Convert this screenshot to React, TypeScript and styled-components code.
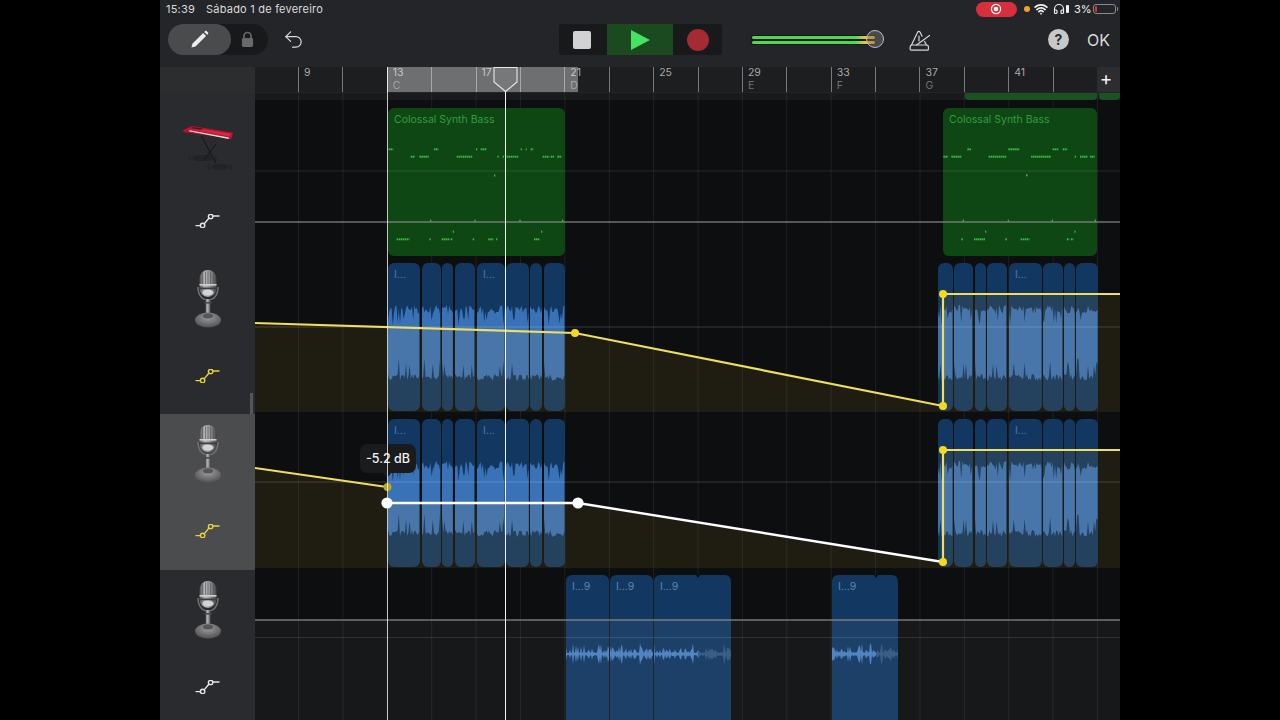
import React from "react";
import styled, { createGlobalStyle } from "styled-components";
import { Undo2, Headphones, Wifi } from "lucide-react";

const Global = createGlobalStyle`
  html, body { margin: 0; padding: 0; background: #000; }
  body { font-family: Inter, "Liberation Sans", sans-serif; }
`;

const Page = styled.div`
  width: 1280px; height: 720px; background: #000; display: flex; justify-content: center; overflow: hidden;
`;
const Frame = styled.div`
  position: relative; width: 960px; height: 720px; background: #232528;
  display: flex; flex-direction: column; overflow: hidden;
`;
const StatusBar = styled.div`
  height: 18px; display: flex; align-items: center; padding: 0 4px 0 6px; color: #dcdcdc; font-size: 11px; flex: none;
`;
const StatusTime = styled.span` width: 40px; letter-spacing: 0.2px; `;
const StatusDate = styled.span` letter-spacing: 0.22px; `;
const StatusRight = styled.div`
  margin-left: auto; display: flex; align-items: center; color: #f0f0f0;
`;
const RecordPill = styled.div`
  width: 41px; height: 15px; border-radius: 8px; background: #d92f3c; display: flex; align-items: center; justify-content: center;
`;
const OrangeDot = styled.span`
  width: 6.5px; height: 6.5px; border-radius: 50%; background: #f0a028; margin: 0 4px 0 7px;
`;
const HeadphoneSlot = styled.span` display: flex; align-items: center; margin-left: 5px; `;
const Percent = styled.span` font-size: 11px; width: 16px; margin: 0 3px 0 5px; `;
const Battery = styled.div`
  position: relative; width: 23px; height: 10px; box-sizing: border-box; border: 1px solid #8a8a8a; border-radius: 3px; padding: 1px; display: flex;
  &::after {
    content: ""; position: absolute; right: -3px; top: 2px; width: 1.5px; height: 4px; background: #8a8a8a; border-radius: 0 1px 1px 0;
  }
`;
const BatteryLevel = styled.span` width: 2px; background: #d83a3a; border-radius: 1px; `;

const Toolbar = styled.div`
  height: 49px; flex: none; display: flex; align-items: flex-start; padding: 6px 9px 0 8px; box-sizing: border-box;
`;
const ModePill = styled.div`
  width: 100px; height: 31px; border-radius: 16px; background: #18191b; display: flex; align-items: center;
`;
const ModeActive = styled.div`
  width: 63px; height: 31px; border-radius: 16px; background: #4a4b4d; display: flex; align-items: center; justify-content: center;
`;
const LockSlot = styled.div` flex: 1; display: flex; justify-content: center; padding-right: 5px; `;
const UndoSlot = styled.div`
  margin: 4px 0 0 14px; width: 23px; color: #dadada; display: flex;
`;
const Transport = styled.div`
  margin-left: 254px; width: 163px; height: 31px; display: flex; border-radius: 3px; overflow: hidden; background: #18191b;
`;
const TransportCell = styled.div<{ $w: number; $bg?: string; $pr?: number }>`
  width: ${p => p.$w}px; box-sizing: border-box; padding-right: ${p => p.$pr || 0}px;
  display: flex; align-items: center; justify-content: center; background: ${p => p.$bg || "transparent"};
`;
const StopSquare = styled.span` width: 18px; height: 18px; border-radius: 2px; background: #d2d2d4; `;
const RecordDot = styled.span` width: 22px; height: 22px; border-radius: 50%; background: #a42a33; `;
const Volume = styled.div`
  position: relative; margin: 6px 0 0 30px; width: 132px; height: 19px; padding-top: 6px;
  display: flex; flex-direction: column; gap: 1.5px;
`;
const VolumeLine = styled.span`
  width: 123px; height: 3px; border-radius: 2px; background: linear-gradient(to right, #4cd854 0 84%, #f2c431 92%, #f0a828 100%);
  box-shadow: 0 0 0 1px #15161a;
`;
const VolumeThumb = styled.span`
  position: absolute; left: 114px; top: 0; width: 18px; height: 18px; box-sizing: border-box; border-radius: 50%;
  border: 1.5px solid #bdbdbd; background: rgba(120,120,120,.45);
`;
const MetroSlot = styled.div` margin: 6px 0 0 25px; width: 22px; `;
const HelpBtn = styled.div`
  margin: 5px 0 0 auto; width: 21px; height: 21px; border-radius: 50%; background: #c8c8ca; color: #2a2b2d;
  font-size: 14px; font-weight: 700; display: flex; align-items: center; justify-content: center;
`;
const OkBtn = styled.div`
  margin: 6px 0 0 18px; color: #dcdcdc; font-size: 16px; line-height: 20px; width: 24px;
`;

const RulerRow = styled.div` height: 26px; flex: none; display: flex; `;
const RulerCorner = styled.div` width: 95px; flex: none; background: #2b2d2f; `;
const RulerTrack = styled.div`
  position: relative; flex: 1; display: flex; padding-left: 43px; background: #1d1e20; height: 25px; overflow: hidden;
`;
const RulerCell = styled.div`
  width: 44.4px; flex: none; box-sizing: border-box; border-left: 1px solid #77787a; padding: 0 0 0 5px;
  font-size: 10.5px; color: #a9a9a9; display: flex; flex-direction: column;
`;
const RulerBar = styled.span` line-height: 12.5px; `;
const RulerNote = styled.span` color: #717172; line-height: 12.5px; `;
const LoopBand = styled.div`
  position: absolute; left: 132px; top: 0; width: 191px; height: 25px; background: rgba(255,255,255,.36);
`;
const PlayHandle = styled.svg`
  position: absolute; left: 238px; top: 0; width: 25px; height: 25px;
`;
const AddCell = styled.div`
  width: 23px; flex: none; box-sizing: border-box; padding-right: 5px; height: 25px; background: #2b2d2f; color: #f2f2f2; font-size: 19px; line-height: 24px; text-align: center;
`;

const Tracks = styled.div` flex: 1; display: flex; flex-direction: column; min-height: 0; `;
const Row = styled.div<{ $h: number }>` height: ${p => p.$h}px; flex: none; display: flex; `;
const TrackHead = styled.div<{ $selected?: boolean; $pt: number; $gap: number }>`
  position: relative; width: 95px; flex: none; box-sizing: border-box; display: flex; flex-direction: column; align-items: center;
  padding-top: ${p => p.$pt}px; gap: ${p => p.$gap}px; background: ${p => (p.$selected ? "#4b4c4e" : "#292b2e")};
`;
const HeadScroll = styled.span`
  position: absolute; right: 2px; bottom: 0; width: 3px; height: 21px; background: #55565a;
`;
const Lane = styled.div`
  position: relative; flex: 1; overflow: hidden; background-color: #0d0e0f;
  background-image: linear-gradient(to right, #1d1e1f 1px, transparent 1px);
  background-size: 44.4px 100%; background-position: 43px 0;
`;
const TopStrip = styled.div<{ $x: number; $w: number }>`
  position: absolute; left: ${p => p.$x - 255}px; top: 0; width: ${p => p.$w}px; height: 7px; background: #1b5222; border-radius: 0 0 4px 4px;
`;
const TopShade = styled.div`
  position: absolute; left: 0; right: 0; top: 0; height: 7px; background: rgba(255,255,255,.05);
`;
const Region = styled.div<{ $x: number; $w: number; $top: number; $h: number }>`
  position: absolute; left: ${p => p.$x}px; width: ${p => p.$w}px; top: ${p => p.$top}px; height: ${p => p.$h}px;
  overflow: hidden;
`;
const MidiRegion = styled(Region)` background: #0e4614; border-radius: 6px; `;
const AudioRegion = styled(Region)` background: #123862; border-radius: 6px; `;
const Notch = styled.span<{ $x: number }>`
  position: absolute; left: ${p => p.$x}px; top: 0; border-left: 2.5px solid transparent; border-right: 2.5px solid transparent;
  border-top: 3px solid #0d0e0f;
`;
const RegionName = styled.div<{ $c: string }>`
  position: absolute; left: 6px; top: 5px; font-size: 10.5px; line-height: 13px; color: ${p => p.$c}; white-space: nowrap;
`;
const Drawing = styled.svg` position: absolute; left: 0; top: 0; width: 100%; height: 100%; `;
const Tooltip = styled.div`
  position: absolute; left: 105px; top: 30px; width: 56px; height: 29px; border-radius: 7px; background: #1a1b1d;
  color: #f2f2f2; font-size: 12.5px; font-weight: 500; display: flex; align-items: center; justify-content: center;
  &::after {
    content: ""; position: absolute; left: 22px; bottom: -5px; border-left: 5px solid transparent; border-right: 5px solid transparent;
    border-top: 6px solid #1a1b1d;
  }
`;
const VLine = styled.div<{ $x: number; $top: number; $w: number; $c: string }>`
  position: absolute; left: ${p => p.$x - 160}px; top: ${p => p.$top}px; bottom: 0; width: ${p => p.$w}px; background: ${p => p.$c};
  pointer-events: none;
`;

const BARS = [
  ["9"], [""], ["13", "C"], [""], ["17"], [""], ["21", "D"], [""], ["25"], [""], ["29", "E"], [""], ["33", "F"], [""], ["37", "G"], [""], ["41"], [""],
];

function rng(seed: number) {
  let s = seed;
  return () => {
    s = (s * 16807) % 2147483647;
    return s / 2147483647;
  };
}

function Wave({ w, seed }: { w: number; seed: number }) {
  const r = rng(seed * 991 + 17);
  const c = 80;
  const top: string[] = [];
  const bottom: string[] = [];
  for (let x = 0; x <= w; x += 1.2) {
    const a = r() < 0.13 ? 17 + r() * 8 : 29 + r() * 9;
    const b = r() < 0.13 ? 15 + r() * 8 : 31 + r() * 7;
    top.push(`${x},${c - a}`);
    bottom.unshift(`${x},${c + b}`);
  }
  return (
    <Drawing viewBox={`0 0 ${w} 148`} preserveAspectRatio="none">
      <polygon points={[...top, ...bottom].join(" ")} fill="#3a72b8" />
    </Drawing>
  );
}

function SmallWave({ w, dimFrom, seed }: { w: number; dimFrom?: number; seed: number }) {
  const r = rng(seed * 733 + 5);
  const c = 79;
  const make = (from: number, to: number) => {
    const t: string[] = [];
    const b: string[] = [];
    for (let x = from; x <= to; x += 1) {
      const a = r() < 0.13 ? 6 + r() * 5 : r() < 0.4 ? 3 + r() * 3 : 1 + r();
      t.push(`${x},${c - a}`);
      b.unshift(`${x},${c + a}`);
    }
    return [...t, ...b].join(" ");
  };
  const end = dimFrom ?? w;
  return (
    <Drawing viewBox={`0 0 ${w} 151`} preserveAspectRatio="none">
      <polygon points={make(0, end)} fill="#4a80bd" />
      {dimFrom !== undefined && <polygon points={make(dimFrom, w)} fill="#33587f" />}
    </Drawing>
  );
}

const SEG_A: [number, number][] = [[388, 421], [422, 442], [442, 454], [455, 476], [477, 506], [506, 530], [530, 543], [544, 566]];
const SEG_B: [number, number][] = [[938, 954], [954, 974], [975, 987], [987, 1008], [1009, 1043], [1043, 1064], [1064, 1076], [1076, 1099]];

function AudioSet({ top, rowTop }: { top: number; rowTop: number }) {
  return (
    <>
      {SEG_A.map(([a, b], i) => (
        <AudioRegion key={a} $x={a - 255} $w={b - a - 1} $top={top - rowTop} $h={148}>
          <Wave w={b - a - 1} seed={a + 3} />
          {(i === 0 || i === 4) && <RegionName $c="#4a78a8">I...</RegionName>}
        </AudioRegion>
      ))}
      {SEG_B.map(([a, b], i) => (
        <AudioRegion key={a} $x={a - 255} $w={b - a - 1} $top={top - rowTop} $h={148}>
          <Wave w={b - a - 1} seed={a + 3} />
          {i === 4 && <RegionName $c="#4a78a8">I...</RegionName>}
        </AudioRegion>
      ))}
    </>
  );
}

const NOTES_A: [number, number[][]][] = [
  [149.3, [[686, 700], [822, 835], [948, 952], [962, 980], [1082, 1086], [1097, 1100], [1112, 1120]]],
  [156.7, [[752, 765], [778, 806], [890, 938], [1012, 1016], [1028, 1032], [1040, 1075], [1148, 1168], [1172, 1182], [1192, 1205]]],
  [175.6, [[1002, 1006]]],
  [220.7, [[810, 814], [943, 947], [1078, 1082], [1206, 1210]]],
  [231.7, [[878, 882], [1143, 1147]]],
  [239.3, [[710, 748], [808, 812], [845, 868], [872, 878], [938, 943], [985, 1000], [1008, 1012], [1122, 1138]]],
];
const NOTES_B: [number, number[][]][] = [
  [149.3, [[142, 153], [265, 298], [398, 416], [428, 442]]],
  [156.7, [[70, 84], [94, 125], [206, 260], [333, 392], [464, 468], [480, 502], [510, 524]]],
  [175.3, [[318, 323]]],
  [220.7, [[128, 132], [263, 267], [395, 399], [524, 528]]],
  [231.7, [[195, 199], [463, 467]]],
  [239.3, [[124, 129], [162, 195], [256, 261], [302, 328], [440, 448], [453, 460]]],
];

function Notes({ data, toPage, left }: { data: [number, number[][]][]; toPage: (z: number) => number; left: number }) {
  const rects: React.ReactNode[] = [];
  data.forEach(([y, runs]) => {
    runs.forEach(([a, b]) => {
      const x0 = toPage(a);
      const x1 = toPage(b);
      for (let x = x0; x < x1; x += 2) {
        rects.push(
          <rect key={`${y}-${x}`} x={x} y={y - 1} width={Math.min(1.6, x1 - x)} height={2} fill="#38b648" />
        );
      }
    });
  });
  return (
    <Drawing viewBox={`${left} 108 ${left === 388 ? 177 : 154} 148`} preserveAspectRatio="none">
      {rects}
    </Drawing>
  );
}

function AutoIcon({ color }: { color: string }) {
  return (
    <svg width="26" height="14" viewBox="0 0 26 14" fill="none" stroke={color} strokeWidth="1.4">
      <path d="M1 11.6h4.6M9.4 9.6l4.6-5.6M17.8 2h6.2" strokeLinecap="round" />
      <circle cx="7.6" cy="11.4" r="2.2" />
      <circle cx="15.6" cy="2.4" r="2.2" />
    </svg>
  );
}

function Mic() {
  return (
    <svg width="30" height="58" viewBox="0 0 30 58">
      <defs>
        <linearGradient id="micBody" x1="0" x2="1" y1="0" y2="0">
          <stop offset="0" stopColor="#4e4e50" />
          <stop offset=".3" stopColor="#b4b4b6" />
          <stop offset=".55" stopColor="#a0a0a2" />
          <stop offset="1" stopColor="#454547" />
        </linearGradient>
        <radialGradient id="micBase" cx=".5" cy=".35" r=".7">
          <stop offset="0" stopColor="#9c9c9e" />
          <stop offset="1" stopColor="#4c4c4e" />
        </radialGradient>
      </defs>
      <rect x="6.5" y="0" width="17" height="27" rx="8.5" fill="url(#micBody)" />
      <path d="M9.5 3v11M12.5 1.5V14M15 1v13M17.5 1.5V14M20.5 3v11" stroke="#5c5c5e" strokeWidth=".7" />
      <rect x="6.5" y="14" width="17" height="1.6" fill="#cfcfd1" />
      <rect x="6" y="17.5" width="18" height="1.8" fill="#3e3e40" />
      <ellipse cx="15" cy="22.5" rx="5.5" ry="3" fill="#d4d4d6" />
      <path d="M5 17c0 8 4 13 10 13s10-5 10-13" fill="none" stroke="#707072" strokeWidth="1.5" />
      <rect x="12.5" y="29" width="5" height="15" fill="url(#micBody)" />
      <rect x="11.5" y="32" width="7" height="1.6" fill="#4a4a4c" />
      <ellipse cx="15" cy="50" rx="13" ry="7.5" fill="url(#micBase)" />
      <ellipse cx="15" cy="46" rx="5" ry="2.5" fill="#565658" />
    </svg>
  );
}

function Keyboard() {
  return (
    <svg width="50" height="46" viewBox="0 0 50 46">
      <defs>
        <filter id="kbBlur"><feGaussianBlur stdDeviation="2.5" /></filter>
      </defs>
      <ellipse cx="20" cy="33" rx="12" ry="2.5" fill="#1c1d1f" filter="url(#kbBlur)" />
      <ellipse cx="37" cy="42" rx="11" ry="2" fill="#1c1d1f" filter="url(#kbBlur)" />
      <path d="M18.3 11 33 38M33 19 21 35" stroke="#17181a" strokeWidth="1.1" fill="none" />
      <polygon points="0.3,5 9,1 50,7.7 48.3,14.3 30,11 0.3,7" fill="#b81530" />
      <polygon points="9,2.4 48,8.8 47,11.5 7,4.2" fill="#d42a42" />
      <polygon points="6.3,5.2 45.7,12.4 45.7,14 6,6.2" fill="#e8e2e2" />
      <polygon points="9,2 20,3.6 18,5 8,3.4" fill="#5c1220" />
    </svg>
  );
}

function Metronome() {
  return (
    <svg width="22" height="21" viewBox="0 0 22 21" fill="none" stroke="#d6d6d6" strokeWidth="1.2" strokeLinejoin="round" strokeLinecap="round">
      <path d="M2.5 15 8.6 2.2c.5-1 2-1 2.6 0l1.8 4M15.5 11.5 17.5 15" />
      <path d="M1.2 19.2v-2.4c0-1 .8-1.8 1.8-1.8h14.6c1 0 1.8.8 1.8 1.8v2.4c0 .6-.4 1-1 1H2.2c-.6 0-1-.4-1-1z" />
      <path d="M7.5 15 20.5 5.5M10 6v5" />
    </svg>
  );
}

function Pencil() {
  return (
    <svg width="19" height="19" viewBox="0 0 20 20">
      <path d="M1.5 18.5l1.2-4.4L13.9 3.2l3 3L5.8 17.4z" fill="#ededed" />
      <path d="M15 2.1l1-1c.4-.4 1-.4 1.4 0l1.6 1.6c.4.4.4 1 0 1.4l-1 1z" fill="#ededed" />
    </svg>
  );
}

function Lock() {
  return (
    <svg width="13" height="17" viewBox="0 0 14 17">
      <path d="M3.2 7V4.8a3.8 3.8 0 0 1 7.6 0V7" fill="none" stroke="#69696b" strokeWidth="1.8" />
      <rect x="1" y="7" width="12" height="9.5" rx="1.6" fill="#69696b" />
    </svg>
  );
}

function Play() {
  return (
    <svg width="19" height="20" viewBox="0 0 19 20">
      <polygon points="0,0 19,10 0,20" fill="#46e262" />
    </svg>
  );
}

const App: React.FC = () => (
  <Page>
    <Global />
    <Frame>
      <StatusBar>
        <StatusTime>15:39</StatusTime>
        <StatusDate>Sábado 1 de fevereiro</StatusDate>
        <StatusRight>
          <RecordPill>
            <svg width="12" height="12" viewBox="0 0 12 12">
              <circle cx="6" cy="6" r="4.6" fill="none" stroke="#fff" strokeWidth="1.2" />
              <circle cx="6" cy="6" r="2.3" fill="#fff" />
            </svg>
          </RecordPill>
          <OrangeDot />
          <Wifi size={14} strokeWidth={3} />
          <HeadphoneSlot>
            <Headphones size={12} strokeWidth={2.4} />
            <svg width="4" height="10" viewBox="0 0 4 10"><rect x="1" y="1" width="3" height="8" rx="1" fill="#f0f0f0" /></svg>
          </HeadphoneSlot>
          <Percent>3%</Percent>
          <Battery><BatteryLevel /></Battery>
        </StatusRight>
      </StatusBar>
      <Toolbar>
        <ModePill>
          <ModeActive><Pencil /></ModeActive>
          <LockSlot><Lock /></LockSlot>
        </ModePill>
        <UndoSlot><Undo2 size={23} strokeWidth={1.25} /></UndoSlot>
        <Transport>
          <TransportCell $w={48} $pr={2}><StopSquare /></TransportCell>
          <TransportCell $w={66} $bg="#1b4a20"><Play /></TransportCell>
          <TransportCell $w={49}><RecordDot /></TransportCell>
        </Transport>
        <Volume>
          <VolumeLine />
          <VolumeLine />
          <VolumeThumb />
        </Volume>
        <MetroSlot><Metronome /></MetroSlot>
        <HelpBtn>?</HelpBtn>
        <OkBtn>OK</OkBtn>
      </Toolbar>
      <RulerRow>
        <RulerCorner />
        <RulerTrack>
          <LoopBand />
          {BARS.map(([n, k], i) => (
            <RulerCell key={i}>
              {n && <RulerBar>{n}</RulerBar>}
              {k && <RulerNote>{k}</RulerNote>}
            </RulerCell>
          ))}
          <PlayHandle viewBox="0 0 25 25">
            <polygon points="1,0.5 24,0.5 24,15 12.5,24.5 1,15" fill="#77787a" stroke="#e8e8e8" strokeWidth="1.1" />
          </PlayHandle>
        </RulerTrack>
        <AddCell>+</AddCell>
      </RulerRow>
      <Tracks>
        <Row $h={165}>
          <TrackHead $pt={32} $gap={43}>
            <Keyboard />
            <AutoIcon color="#e6e6e6" />
          </TrackHead>
          <Lane>
            <TopShade />
            <TopStrip $x={965} $w={132} />
            <TopStrip $x={1099} $w={21} />
            <MidiRegion $x={133} $w={177} $top={15} $h={148}>
              <RegionName $c="#2f9f3d">Colossal Synth Bass</RegionName>
              <Notes data={NOTES_A} left={388} toPage={z => z / 3 + 160} />
            </MidiRegion>
            <MidiRegion $x={688} $w={154} $top={15} $h={148}>
              <RegionName $c="#2f9f3d">Colossal Synth Bass</RegionName>
              <Notes data={NOTES_B} left={943} toPage={z => z / 3 + 920} />
            </MidiRegion>
            <Drawing viewBox="255 93 865 165">
              <line x1="255" x2="1120" y1="171" y2="171" stroke="#fff" strokeOpacity=".1" />
              <line x1="255" x2="1120" y1="222" y2="222" stroke="#8a8a8a" strokeOpacity=".8" strokeWidth="1.6" />
            </Drawing>
          </Lane>
        </Row>
        <Row $h={156}>
          <TrackHead $pt={12} $gap={41}>
            <Mic />
            <AutoIcon color="#e8d23a" />
            <HeadScroll />
          </TrackHead>
          <Lane>
            <AudioSet top={263} rowTop={258} />
            <Drawing viewBox="255 258 865 156">
              <polygon points="255,323 575,333 943,406 943,294 1120,294 1120,412 255,412" fill="rgb(193,153,45)" fillOpacity=".1" />
              <line x1="255" x2="1120" y1="327" y2="327" stroke="#fff" strokeOpacity=".22" strokeWidth=".8" />
              <polyline points="255,323 575,333 943,406 943,294 1120,294" fill="none" stroke="#f0de5c" strokeWidth="2.2" />
              <circle cx="575" cy="333" r="4" fill="#f5d91f" />
              <circle cx="943" cy="406" r="4" fill="#f5d91f" />
              <circle cx="943" cy="294" r="4" fill="#f5d91f" />
            </Drawing>
          </Lane>
        </Row>
        <Row $h={156}>
          <TrackHead $selected $pt={11} $gap={41}>
            <Mic />
            <AutoIcon color="#e8d23a" />
          </TrackHead>
          <Lane>
            <AudioSet top={419} rowTop={414} />
            <Drawing viewBox="255 414 865 156">
              <polygon points="255,468 387,487 387,503 578,503 943,562 943,450 1120,450 1120,568 255,568" fill="rgb(193,153,45)" fillOpacity=".1" />
              <line x1="255" x2="1120" y1="482" y2="482" stroke="#fff" strokeOpacity=".22" strokeWidth=".8" />
              <polyline points="255,468 387,487" fill="none" stroke="#f0de5c" strokeWidth="2" />
              <polyline points="943,562 943,450 1120,450" fill="none" stroke="#f0de5c" strokeWidth="2.2" />
              <polyline points="387,503 578,503 943,562" fill="none" stroke="#fff" strokeWidth="2.4" />
              <circle cx="387.5" cy="487" r="4" fill="#b9a52a" />
              <circle cx="387" cy="503" r="5.6" fill="#fff" />
              <circle cx="578" cy="503" r="5.6" fill="#fff" />
              <circle cx="943" cy="562" r="4" fill="#f5d91f" />
              <circle cx="943" cy="450" r="4" fill="#f5d91f" />
            </Drawing>
            <Tooltip>-5.2 dB</Tooltip>
          </Lane>
        </Row>
        <Row $h={150}>
          <TrackHead $pt={11} $gap={41}>
            <Mic />
            <AutoIcon color="#e6e6e6" />
          </TrackHead>
          <Lane>
            <AudioRegion $x={311} $w={43} $top={5} $h={151}>
              <RegionName $c="#5a84b0">I...9</RegionName>
              <SmallWave w={43} seed={1} />
            </AudioRegion>
            <AudioRegion $x={355} $w={43} $top={5} $h={151}>
              <RegionName $c="#5a84b0">I...9</RegionName>
              <SmallWave w={43} seed={2} />
            </AudioRegion>
            <AudioRegion $x={399} $w={77} $top={5} $h={151}>
              <RegionName $c="#5a84b0">I...9</RegionName>
              <SmallWave w={77} dimFrom={44} seed={3} />
              <Notch $x={42} />
            </AudioRegion>
            <AudioRegion $x={577} $w={66} $top={5} $h={151}>
              <RegionName $c="#5a84b0">I...9</RegionName>
              <SmallWave w={66} dimFrom={44} seed={4} />
              <Notch $x={42} />
            </AudioRegion>
            <Drawing viewBox="255 570 865 150">
              <rect x="255" y="620" width="865" height="100" fill="#fff" fillOpacity=".045" />
              <line x1="255" x2="1120" y1="620" y2="620" stroke="#8a8a8a" strokeOpacity=".85" strokeWidth="1.6" />
              <line x1="255" x2="1120" y1="637.5" y2="637.5" stroke="#fff" strokeOpacity=".14" strokeWidth=".8" />
            </Drawing>
          </Lane>
        </Row>
      </Tracks>
      <VLine $x={387} $top={67} $w={1} $c="rgba(255,255,255,.75)" />
      <VLine $x={505} $top={91} $w={1.2} $c="#f4f4f4" />
    </Frame>
  </Page>
);

export default App;
